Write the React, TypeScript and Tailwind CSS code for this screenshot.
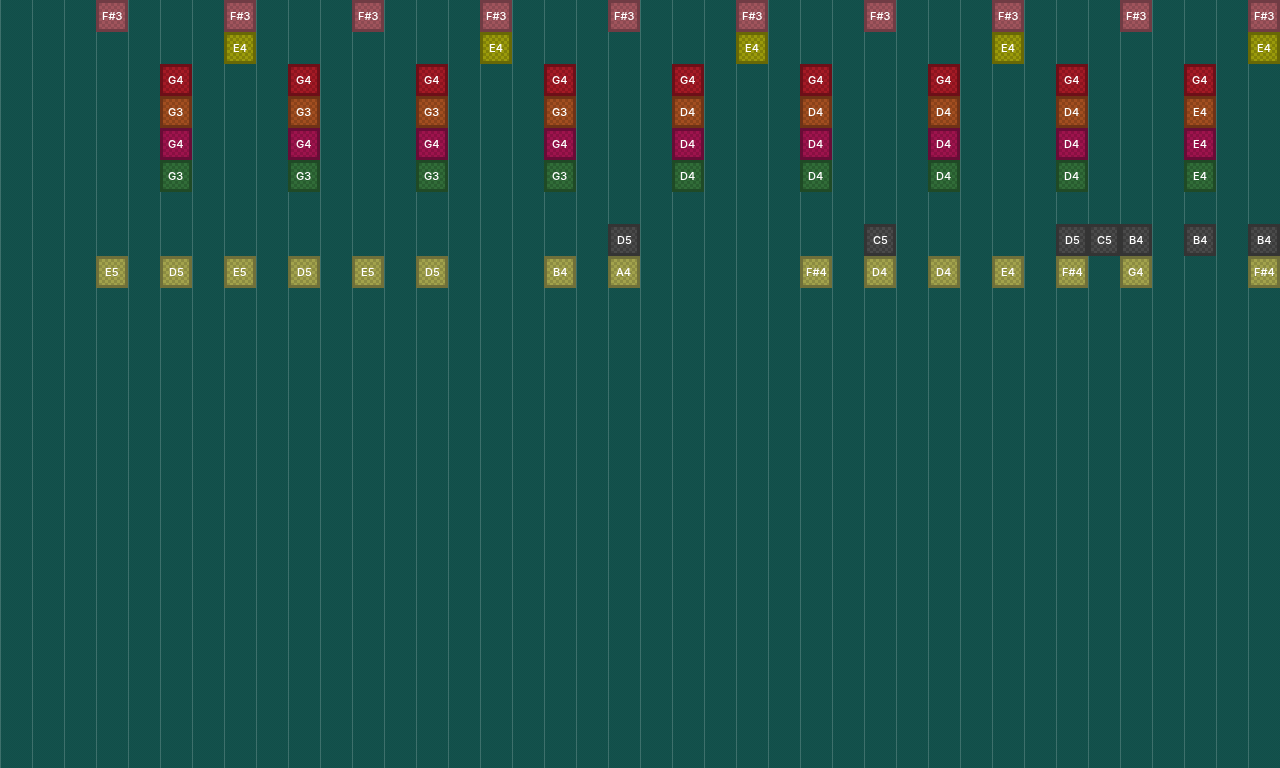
const ROWS: { row: number; tone: string; notes: [number, string][] }[] = [
    { row: 0, tone: 'rose', notes: [[3, 'F#3'], [7, 'F#3'], [11, 'F#3'], [15, 'F#3'], [19, 'F#3'], [23, 'F#3'], [27, 'F#3'], [31, 'F#3'], [35, 'F#3'], [39, 'F#3']] },
    { row: 1, tone: 'yellow', notes: [[7, 'E4'], [15, 'E4'], [23, 'E4'], [31, 'E4'], [39, 'E4']] },
    { row: 2, tone: 'red', notes: [[5, 'G4'], [9, 'G4'], [13, 'G4'], [17, 'G4'], [21, 'G4'], [25, 'G4'], [29, 'G4'], [33, 'G4'], [37, 'G4']] },
    { row: 3, tone: 'orange', notes: [[5, 'G3'], [9, 'G3'], [13, 'G3'], [17, 'G3'], [21, 'D4'], [25, 'D4'], [29, 'D4'], [33, 'D4'], [37, 'E4']] },
    { row: 4, tone: 'crimson', notes: [[5, 'G4'], [9, 'G4'], [13, 'G4'], [17, 'G4'], [21, 'D4'], [25, 'D4'], [29, 'D4'], [33, 'D4'], [37, 'E4']] },
    { row: 5, tone: 'green', notes: [[5, 'G3'], [9, 'G3'], [13, 'G3'], [17, 'G3'], [21, 'D4'], [25, 'D4'], [29, 'D4'], [33, 'D4'], [37, 'E4']] },
    { row: 7, tone: 'gray', notes: [[19, 'D5'], [27, 'C5'], [33, 'D5'], [34, 'C5'], [35, 'B4'], [37, 'B4'], [39, 'B4']] },
    { row: 8, tone: 'olive', notes: [[3, 'E5'], [5, 'D5'], [7, 'E5'], [9, 'D5'], [11, 'E5'], [13, 'D5'], [17, 'B4'], [19, 'A4'], [25, 'F#4'], [27, 'D4'], [29, 'D4'], [31, 'E4'], [33, 'F#4'], [35, 'G4'], [39, 'F#4']] },
]

const TONES: Record<string, string> = {
    rose: 'border-[#703c44] bg-[repeating-conic-gradient(#a0545c_0_25%,#8c4a52_0_50%)]',
    yellow: 'border-[#686806] bg-[repeating-conic-gradient(#9a9a0a_0_25%,#808008_0_50%)]',
    red: 'border-[#6d0f18] bg-[repeating-conic-gradient(#a41a25_0_25%,#8c141f_0_50%)]',
    orange: 'border-[#6f3316] bg-[repeating-conic-gradient(#a24e20_0_25%,#8a421a_0_50%)]',
    crimson: 'border-[#680c36] bg-[repeating-conic-gradient(#9e134d_0_25%,#881042_0_50%)]',
    green: 'border-[#1f4a26] bg-[repeating-conic-gradient(#316c38_0_25%,#285c2f_0_50%)]',
    gray: 'border-[#343434] bg-[repeating-conic-gradient(#4a4a4a_0_25%,#3c3c3c_0_50%)]',
    olive: 'border-[#70703a] bg-[repeating-conic-gradient(#a2a24c_0_25%,#8c8c42_0_50%)]',
}

function Note({ row, col, tone, label }: { row: number; col: number; tone: string; label: string }) {
    return (
        <div
            className={`flex items-center justify-center border-[3px] bg-[length:6px_6px] pt-px font-['Inter',sans-serif] text-[11px] leading-none font-medium text-white ${TONES[tone]}`}
            style={{ gridColumn: col + 1, gridRow: row + 1 }}
        >
            <span className="[will-change:transform]">{label}</span>
        </div>
    )
}

export default function App() {
    return (
        <div className="grid h-screen w-full grid-cols-[repeat(40,32px)] grid-rows-[repeat(24,32px)] overflow-hidden bg-[#14504c] bg-[linear-gradient(90deg,#3e706c_1px,transparent_1px),repeating-conic-gradient(#14524d_0_25%,#124e49_0_50%)] bg-[length:32px_32px,2px_2px]">
            {ROWS.map((r) =>
                r.notes.map(([col, label]) => (
                    <Note key={`${r.row}-${col}`} row={r.row} col={col} tone={r.tone} label={label} />
                ))
            )}
        </div>
    )
}
